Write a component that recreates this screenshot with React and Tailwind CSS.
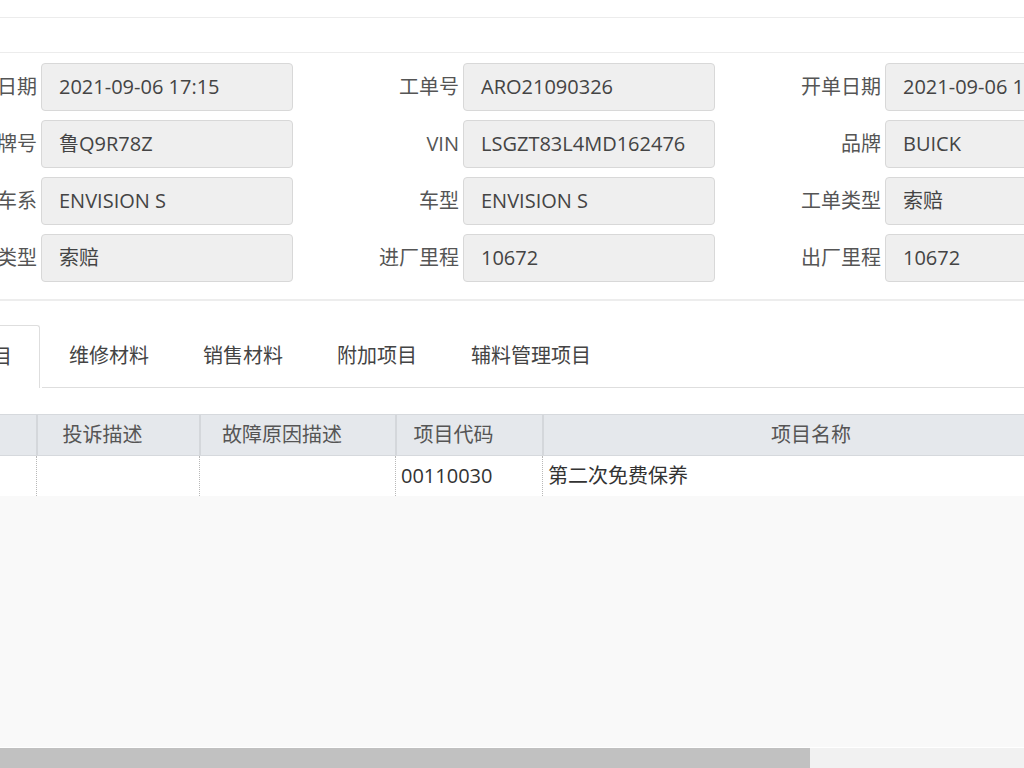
const FIELDS = [
  [
    { label: "开单日期", value: "2021-09-06 17:15" },
    { label: "工单号", value: "ARO21090326" },
    { label: "开单日期", value: "2021-09-06 17:15" },
  ],
  [
    { label: "车牌号", value: "鲁Q9R78Z" },
    { label: "VIN", value: "LSGZT83L4MD162476" },
    { label: "品牌", value: "BUICK" },
  ],
  [
    { label: "车系", value: "ENVISION S" },
    { label: "车型", value: "ENVISION S" },
    { label: "工单类型", value: "索赔" },
  ],
  [
    { label: "结算类型", value: "索赔" },
    { label: "进厂里程", value: "10672" },
    { label: "出厂里程", value: "10672" },
  ],
];

const TABS = ["维修项目", "维修材料", "销售材料", "附加项目", "辅料管理项目"];

const COLUMNS = [
  { title: "工时类型", width: "w-[180px]" },
  { title: "投诉描述", width: "w-[163px]" },
  { title: "故障原因描述", width: "w-[196px]" },
  { title: "项目代码", width: "w-[147px]" },
  { title: "项目名称", width: "w-[568px]" },
];

const ROWS = [["", "", "", "00110030", "第二次免费保养"]];

function Field({ label, value }) {
  return (
    <div className="flex items-center shrink-0 w-[422px]">
      <span className="w-[96px] pr-[4px] text-right text-[#555] whitespace-nowrap">
        {label}
      </span>
      <div className="w-[252px] h-[48px] flex items-center pl-[17px] bg-[#efefef] border border-[#d8d8d8] rounded-[4px] text-[#444] whitespace-nowrap overflow-hidden">
        {value}
      </div>
    </div>
  );
}

export default function App() {
  return (
    <div className="h-screen w-full flex flex-col overflow-hidden bg-white text-[20px] font-['Open_Sans','Noto_Sans_CJK_SC',sans-serif]">
      {/* top bars */}
      <div className="h-[18px] shrink-0 border-b border-[#ececec]" />
      <div className="h-[35px] shrink-0 border-b border-[#ececec]" />

      {/* order header form */}
      <div className="shrink-0 pt-[10px] pb-[17px] border-b-2 border-[#ededed]">
        <div className="flex flex-col gap-[9px] ml-[-55px]">
          {FIELDS.map((row, i) => (
            <div key={i} className="flex">
              {row.map((f, j) => (
                <Field key={j} label={f.label} value={f.value} />
              ))}
            </div>
          ))}
        </div>
      </div>

      {/* tabs */}
      <div className="shrink-0 pt-[24px] flex items-stretch h-[87px]">
        <div className="flex ml-[-96px]">
          <div className="h-full flex items-center px-[27px] bg-white border border-b-0 border-[#dedede] rounded-t-[3px] text-[#444] whitespace-nowrap">
            {TABS[0]}
          </div>
        </div>
        <div className="flex flex-1 ml-[2px] border-b border-[#dedede]">
          {TABS.slice(1).map((t) => (
            <div
              key={t}
              className="flex items-center px-[27px] text-[#444] whitespace-nowrap"
            >
              {t}
            </div>
          ))}
        </div>
      </div>

      {/* items grid */}
      <div className="flex-1 flex flex-col mt-[26px] min-h-0">
        <div className="flex ml-[-144px] shrink-0 bg-[#e5e8ec] border-t border-b border-[#d6d9dd] h-[42px]">
          {COLUMNS.map((c, i) => (
            <div
              key={c.title}
              className={`${c.width} shrink-0 flex items-center justify-center pr-[32px] text-[#555] whitespace-nowrap ${i > 0 ? "border-l-2 border-[#d4d7db]" : ""}`}
            >
              {i > 0 ? c.title : ""}
            </div>
          ))}
        </div>
        <div className="flex-1 bg-[#f9f9f9] min-h-0">
          {ROWS.map((r, i) => (
            <div key={i} className="flex ml-[-144px] h-[40px] bg-white">
              {r.map((cell, j) => (
                <div
                  key={j}
                  className={`${COLUMNS[j].width} shrink-0 flex items-center pl-[5px] text-[#333] whitespace-nowrap ${j > 0 ? "border-l border-dotted border-[#b8b8b8]" : ""}`}
                >
                  {cell}
                </div>
              ))}
            </div>
          ))}
        </div>
        {/* horizontal scrollbar */}
        <div className="h-[21px] shrink-0 flex border-t border-white">
          <div className="w-[810px] bg-[#c1c1c1]" />
          <div className="flex-1 bg-[#f1f1f1]" />
        </div>
      </div>
    </div>
  );
}
